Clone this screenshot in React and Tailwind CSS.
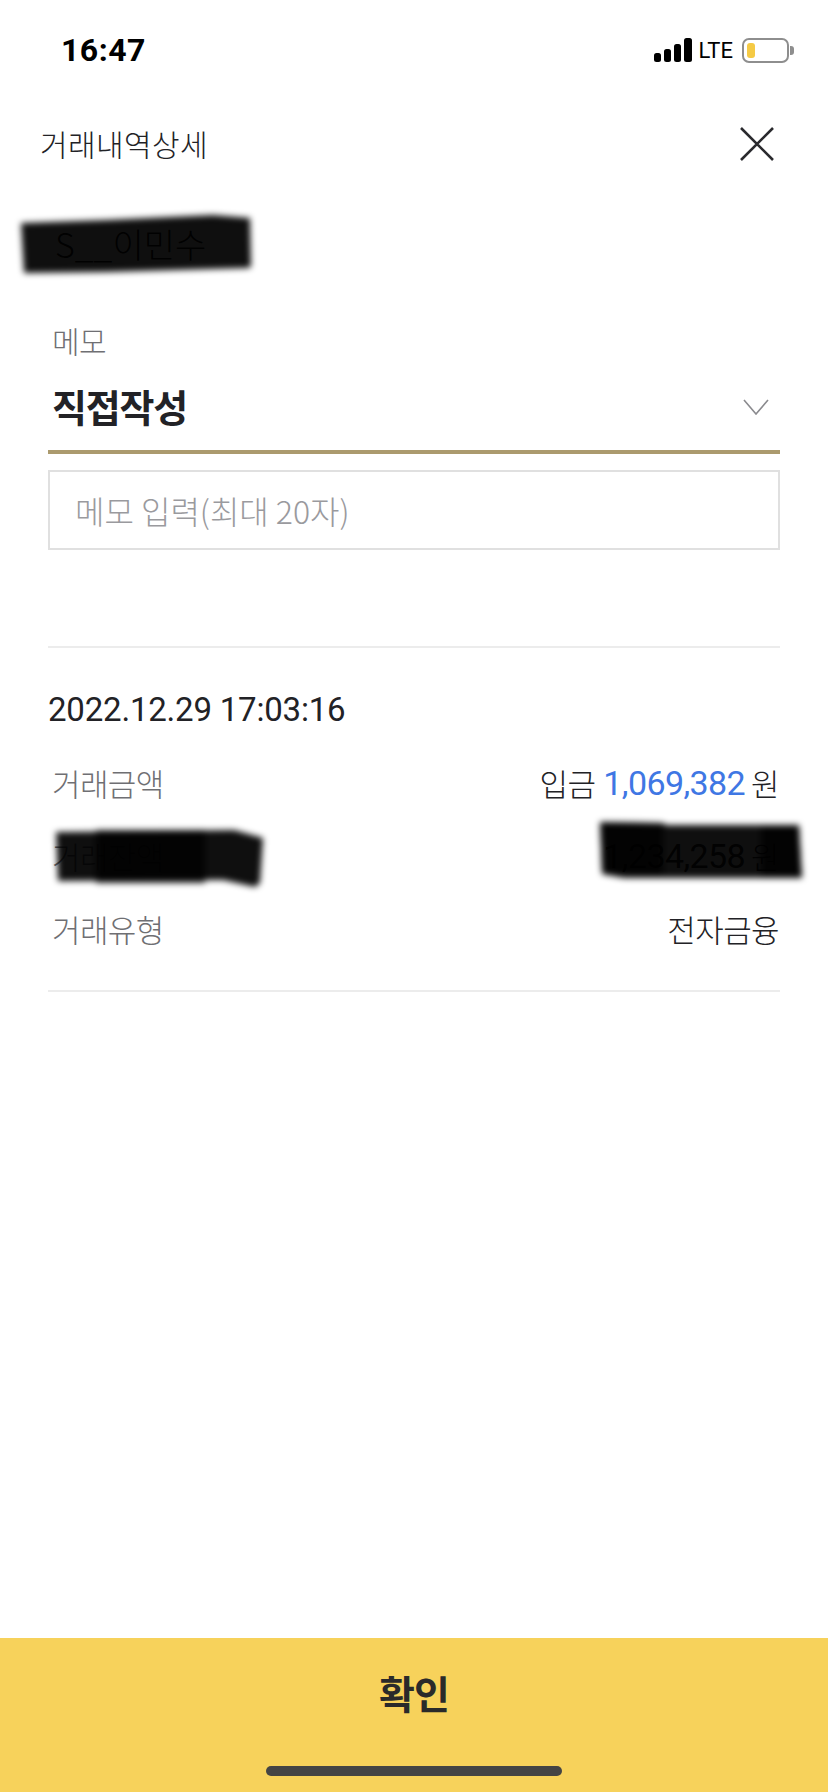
import React from "react";

const kr = "font-['Noto_Sans_CJK_KR','Noto_Sans',sans-serif]";

// marker strokes that black out private values, faint text shows through
const Scribble = ({ className, width, height, points, dark = [] }) => (
  <svg
    width={width}
    height={height}
    viewBox={`0 0 ${width} ${height}`}
    className={`absolute overflow-visible blur-[3px] ${className}`}
  >
    <polygon points={points} fill="#000" fillOpacity="0.94" />
    {dark.map((p) => (
      <polygon key={p} points={p} fill="#000" fillOpacity="0.8" />
    ))}
  </svg>
);

const SignalBars = () => (
  <svg width="38" height="24" viewBox="0 0 38 24" className="block">
    <rect x="0" y="15" width="7" height="9" rx="2.5" fill="#000" />
    <rect x="10" y="11" width="7" height="13" rx="2.5" fill="#000" />
    <rect x="20" y="6" width="7" height="18" rx="2.5" fill="#000" />
    <rect x="30" y="0" width="8" height="24" rx="2.5" fill="#000" />
  </svg>
);

const Battery = () => (
  <div className="flex items-center">
    <div className="w-[47px] h-[25px] rounded-[7px] border-2 border-[#8e8e8e] p-[3px]">
      <div className="w-[8px] h-full rounded-[3px] bg-[#f5ca45]" />
    </div>
    <div className="w-[4px] h-[9px] ml-[1px] rounded-r-[3px] bg-[#8e8e8e]" />
  </div>
);

const Row = ({ label, children }) => (
  <div className="flex items-center justify-between h-[73px] pl-[4px] pr-[1px] text-[31px] tracking-[-0.6px] font-light">
    <span className="text-[#6f6f73]">{label}</span>
    <span className="text-[#222226] flex items-center">{children}</span>
  </div>
);

export default function App() {
  return (
    <div className={`relative w-[828px] h-[1792px] bg-white flex flex-col overflow-hidden ${kr}`}>
      {/* status bar */}
      <div className="flex items-center justify-between h-[100px] pl-[61px] pr-[34px] shrink-0">
        <span className="text-[32px] font-bold tracking-[0.5px] text-black font-['Roboto',sans-serif]">16:47</span>
        <div className="flex items-center gap-[6px]">
          <SignalBars />
          <span className="text-[22px] font-normal text-black font-['Roboto',sans-serif] mt-[1px] mr-[3px]">LTE</span>
          <Battery />
        </div>
      </div>

      {/* header */}
      <div className="flex items-center justify-between h-[88px] pl-[40px] pr-[53px] shrink-0">
        <h1 className="text-[30px] font-light tracking-[0.4px] text-[#222226] -mt-[2px]">거래내역상세</h1>
        <svg width="36" height="36" viewBox="0 0 36 36" fill="none" stroke="#2a2a2e" strokeWidth="2.6">
          <path d="M2 2L34 34M34 2L2 34" />
        </svg>
      </div>

      {/* name, blacked out */}
      <div className="relative h-[88px] shrink-0 pl-[55px] pt-[30px]">
        <span className="text-[34px] font-light text-[#111]">S__이민수</span>
        <Scribble
          className="left-[21px] top-[27px]"
          width={230}
          height={58}
          points="0,8 85,5 192,0 229,3 230,52 226,53 85,57 3,58"
        />
      </div>

      {/* memo */}
      <div className="px-[48px] shrink-0 mt-[44px]">
        <div className="pl-[4px] text-[30px] font-light tracking-[-0.5px] text-[#6f6f73] leading-[40px]">메모</div>
        <div className="flex items-center justify-between h-[94px] pl-[4px] pr-[11px] border-b-4 border-[#ab9a6e]">
          <span className="text-[38px] font-bold tracking-[-1.2px] text-[#222226]">직접작성</span>
          <svg width="26" height="16" viewBox="0 0 26 16" fill="none" stroke="#8a8a8e" strokeWidth="1.6" className="mt-[3px]">
            <path d="M1 1L13 15L25 1" />
          </svg>
        </div>
        <div className="flex items-center h-[80px] mt-[16px] px-[25px] border-2 border-[#e0e0e0] text-[32px] font-light text-[#9a9a9e]">
          메모 입력(최대 20자)
        </div>
      </div>

      {/* details */}
      <div className="mx-[48px] mt-[96px] border-t-2 border-b-2 border-[#ececec] shrink-0 h-[346px]">
        <div className="mt-[42px] text-[33px] leading-[40px] tracking-[-0.2px] text-[#222226] font-['Roboto',sans-serif]">2022.12.29 17:03:16</div>
        <div className="mt-[17px]">
          <Row label="거래금액">
            입금
            <span className="ml-[8px] mr-[6px] text-[#3f77e4] text-[34px] font-['Roboto',sans-serif] font-normal tracking-[-0.6px]">1,069,382</span>
            원
          </Row>
          <div className="relative">
            <Row label="거래잔액">
              <span className="text-[34px] font-['Roboto',sans-serif] tracking-[-0.6px] mr-[6px] font-normal">1,234,258</span>
              원
            </Row>
            <Scribble
              className="left-[8px] top-[10px]"
              width={207}
              height={57}
              points="0,2 178,0 207,8 204,53 199,57 167,50 2,51"
              dark={["40,0 149,0 149,53 40,53"]}
            />
            <Scribble
              className="right-[-22px] top-[2px]"
              width={202}
              height={56}
              points="0,0 63,1 66,3 199,3 202,56 24,56 2,52"
              dark={["0,0 63,1 63,52 2,52", "161,3 199,3 202,56 161,56"]}
            />
          </div>
          <Row label="거래유형">전자금융</Row>
        </div>
      </div>

      {/* confirm */}
      <div className="relative mt-auto h-[154px] bg-[#f7d25b] shrink-0 flex justify-center pt-[29px]">
        <span className="text-[39px] font-bold text-[#2a2a2a] leading-[50px] tracking-[-1px]">확인</span>
        <div className="absolute left-[266px] bottom-[16px] w-[296px] h-[10px] rounded-full bg-[#444444]" />
      </div>
    </div>
  );
}
